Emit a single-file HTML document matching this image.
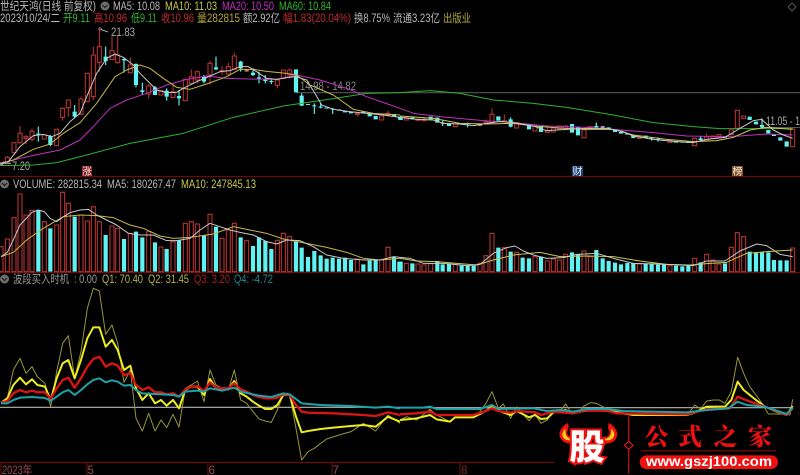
<!DOCTYPE html>
<html><head><meta charset="utf-8">
<style>
html,body{margin:0;padding:0;background:#000;width:800px;height:475px;overflow:hidden}
svg{display:block;position:absolute;left:0;top:0;filter:blur(.35px)}
text{font-family:"Liberation Sans","Noto Sans CJK SC",sans-serif;font-size:11.5px}
.r{fill:none;stroke:#b83434;stroke-width:3.2}
.c{fill:none;stroke:#5ff2f2;stroke-width:12.5}
.w{fill:none;stroke:#5ff2f2;stroke-width:3.5}
.l{fill:none;stroke-width:3;stroke-linejoin:round}
</style></head><body>
<svg width="800" height="475" viewBox="0 0 800 475" xmlns="http://www.w3.org/2000/svg">
<rect width="800" height="475" fill="#000"/>

<!-- separators -->
<path d="M0 176.500H800M0 272.500H800M0 462.500H555" stroke="#6a0c0c" stroke-width="1.200" fill="none"/>
<path d="M87 463V475M208 463V475M332 463V475M460 463V475M1 463V475" stroke="#6a1414" stroke-width="1" fill="none"/>
<path d="M296 92.700H800" stroke="#555" stroke-width="1.200" fill="none"/>
<path d="M763 127.500H800" stroke="#555" stroke-width="1" fill="none"/>

<!-- header -->
<g fill="#b9b9b9">
<text x="0" y="10" textLength="96" lengthAdjust="spacingAndGlyphs">世纪天鸿(日线 前复权)</text>
<text x="113" y="10" textLength="47" lengthAdjust="spacingAndGlyphs">MA5: 10.08</text>
<text x="165" y="10" fill="#c9c94c" textLength="52" lengthAdjust="spacingAndGlyphs">MA10: 11.03</text>
<text x="222" y="10" fill="#c22fc2" textLength="52" lengthAdjust="spacingAndGlyphs">MA20: 10.50</text>
<text x="279" y="10" fill="#2fb52f" textLength="52" lengthAdjust="spacingAndGlyphs">MA60: 10.84</text>
<text x="0" y="22" textLength="60" lengthAdjust="spacingAndGlyphs">2023/10/24/二</text>
<text x="63" y="22" fill="#2fb52f" textLength="27" lengthAdjust="spacingAndGlyphs">开9.11</text>
<text x="94" y="22" fill="#c22a2a" textLength="33" lengthAdjust="spacingAndGlyphs">高10.96</text>
<text x="131" y="22" fill="#2fb52f" textLength="26" lengthAdjust="spacingAndGlyphs">低9.11</text>
<text x="161" y="22" fill="#c22a2a" textLength="33" lengthAdjust="spacingAndGlyphs">收10.96</text>
<text x="197" y="22" fill="#b5a83a" textLength="43" lengthAdjust="spacingAndGlyphs">量282815</text>
<text x="243" y="22" textLength="37" lengthAdjust="spacingAndGlyphs">额2.92亿</text>
<text x="283" y="22" fill="#c22a2a" textLength="68" lengthAdjust="spacingAndGlyphs">幅1.83(20.04%)</text>
<text x="354" y="22" textLength="36" lengthAdjust="spacingAndGlyphs">换8.75%</text>
<text x="393" y="22" textLength="47" lengthAdjust="spacingAndGlyphs">流通3.23亿</text>
<text x="443" y="22" fill="#b5a83a" textLength="28" lengthAdjust="spacingAndGlyphs">出版业</text>
<text x="13" y="188" textLength="89" lengthAdjust="spacingAndGlyphs">VOLUME: 282815.34</text>
<text x="107" y="188" textLength="69" lengthAdjust="spacingAndGlyphs">MA5: 180267.47</text>
<text x="181" y="188" fill="#c9c94c" textLength="75" lengthAdjust="spacingAndGlyphs">MA10: 247845.13</text>
<text x="13" y="283" fill="#999" textLength="56" lengthAdjust="spacingAndGlyphs">波段买入时机</text>
<text x="74" y="283" fill="#999" textLength="23" lengthAdjust="spacingAndGlyphs">: 0.00</text>
<text x="102" y="283" fill="#b5b54a" textLength="41" lengthAdjust="spacingAndGlyphs">Q1: 70.40</text>
<text x="148" y="283" fill="#b5b54a" textLength="41" lengthAdjust="spacingAndGlyphs">Q2: 31.45</text>
<text x="194" y="283" fill="#a82020" textLength="36" lengthAdjust="spacingAndGlyphs">Q3: 3.20</text>
<text x="234" y="283" fill="#1f8a8f" textLength="39" lengthAdjust="spacingAndGlyphs">Q4: -4.72</text>
<text x="111" y="36" fill="#aaa" textLength="24" lengthAdjust="spacingAndGlyphs">21.83</text>
<text x="12" y="170" fill="#aaa" textLength="18" lengthAdjust="spacingAndGlyphs">7.20</text>
<text x="300" y="90" fill="#888" textLength="56" lengthAdjust="spacingAndGlyphs">14.98 - 14.82</text>
<text x="766" y="125" fill="#aaa" textLength="34" lengthAdjust="spacingAndGlyphs">11.05 - 1</text>
<text x="2" y="474" fill="#9a4a4a" textLength="30" lengthAdjust="spacingAndGlyphs">2023年</text>
<text x="87.500" y="474" fill="#9a4a4a">5</text>
<text x="208.500" y="474" fill="#9a4a4a">6</text>
<text x="332.500" y="474" fill="#9a4a4a">7</text>
<text x="461" y="474" fill="#7a2a2a">8</text>
</g>

<!-- pane buttons -->
<g fill="#6e6e6e">
<circle cx="105" cy="6" r="4.500"/><circle cx="4.500" cy="184" r="4.500"/><circle cx="4.500" cy="279" r="4.500"/>
</g>
<path d="M102.500 5l2.500 2.500 2.500-2.500M2 183l2.500 2.500 2.500-2.500M2 278l2.500 2.500 2.500-2.500" fill="none" stroke="#1c1c1c" stroke-width="1.200"/>
<path d="M792 3l4 4-4 4-4-4z" fill="none" stroke="#555" stroke-width="1"/>

<!-- event tags -->
<rect x="82" y="166" width="10" height="10" fill="#8a1818"/>
<rect x="572" y="166" width="11" height="10" fill="#1c4478"/>
<rect x="732" y="166" width="11" height="10" fill="#8a5020"/>
<g fill="#eee"><text x="82" y="175" style="font-size:10px">涨</text><text x="572.500" y="175" style="font-size:10px">财</text><text x="732.500" y="175" style="font-size:10px">榜</text></g>

<!-- markers -->
<circle cx="100" cy="29" r="1.200" fill="none" stroke="#bbb" stroke-width=".7"/>
<path d="M101 29.500L108 32M1 163.500L11 163.500M1 163.500l3-2M1 163.500l3 2" stroke="#ccc" fill="none" stroke-width=".7"/>

<!-- main chart & volume left: coords are zoomed x3 -->
<g transform="scale(.33333)">
<path class="r" d="M22 468V472M22 487V490M60 378V400M60 428V430M78 405V410M78 415V432M96 385V394M96 418V425M188 322V325M188 352V362M205 298V300M205 323V350M243 290V297M243 343V345M280 140V165M280 290V300M298 85V140M298 187V215M336 110V152M336 178V180M353 108V165M353 188V190M391 172V195M391 218V220M446 252V258M446 282V295M519 250V275M519 292V295M574 208V230M574 250V252M592 212V215M592 240V250M630 183V190M630 225V253M666 198V212M666 215V225M685 188V200M685 222V225M703 158V168M703 208V210M832 235V240M832 256V265M869 205V210M869 225V235M1072 343V350M1164 332V340M1164 345V350"/>
<path class="r" d="M16 472h12v15h-12zM36 428h12v30h-12zM54 400h12v28h-12zM72 410h12v5h-12zM90 394h12v24h-12zM127 405h12v12h-12zM164 388h12v49h-12zM182 325h12v27h-12zM199 300h12v23h-12zM237 297h12v46h-12zM256 220h12v85h-12zM274 165h12v125h-12zM292 140h12v47h-12zM330 152h12v26h-12zM347 165h12v23h-12zM385 195h12v23h-12zM440 258h12v24h-12zM477 272h12v13h-12zM513 275h12v17h-12zM550 238h12v64h-12zM568 230h12v20h-12zM586 215h12v25h-12zM624 190h12v35h-12zM660 212h12v3h-12zM679 200h12v22h-12zM697 168h12v40h-12zM826 240h12v16h-12zM844 210h12v25h-12zM863 210h12v15h-12zM1066 340h12v3h-12zM1139 348h12v12h-12zM1158 340h12v5h-12z"/>
<path class="w" d="M115 380V425M151 405V438M224 315V355M317 140V195M372 175V218M408 190V262M427 248V285M465 258V285M500 265V302M537 270V316M612 225V250M648 170V210M722 183V215M759 205V228M777 215V250M796 225V250M814 238V252M905 280V318M943 310V342M962 310V325M998 324V342"/>
<path class="c" d="M115 401V405M151 409V435M224 335V350M317 170V183M372 177V181M408 192V255M427 271V276M465 262V285M500 272V290M537 288V295M612 230V245M648 202V208M722 185V205M759 218V225M777 232V237M796 238V243M814 243V246M888 208V277M905 287V317M924 312V315M943 316V319M962 320V323M980 323V326M998 326V328M1017 328V332M1035 333V337M1053 335V340M1090 335V340M1109 338V349M1127 348V358M1182 342V350M1200 350V358"/>
<path d="M740 208V215" stroke="#d07a30" stroke-width="12" fill="none"/>
<path d="M3 487V497" stroke="#c87ac8" stroke-width="12" fill="none"/>

<path class="l" stroke="#2fb02f" d="M3 497L100 495 170 488 260 465 390 430 550 400 700 352 850 318 1000 296 1100 280 1200 278"/>
<path class="l" stroke="#c030c0" d="M3 490L60 475 120 462 180 450 240 420 280 380 330 325 380 300 440 280 500 255 560 238 620 228 680 235 750 237 830 238 890 225 960 240 1040 265 1100 290 1200 325"/>
<path class="l" stroke="#c4b848" d="M3 490L40 480 100 448 150 432 190 400 240 368 290 310 345 230 380 210 420 195 450 205 490 235 530 262 570 268 620 252 680 230 720 208 760 208 800 214 860 220 890 225 930 255 1000 285 1060 328 1120 340 1200 345"/>
<path class="l" stroke="#c8c8c8" d="M3 490L25 485 60 440 100 407 130 403 155 410 180 400 210 365 240 340 260 290 290 220 320 175 345 162 370 172 400 195 420 220 445 245 470 270 500 278 530 277 550 265 590 245 630 228 660 215 690 212 720 200 745 200 770 215 800 235 830 238 860 233 888 230 920 240 945 280 965 315 1000 328 1050 335 1100 340 1150 345 1200 352"/>

<!-- volume left -->
<g transform="translate(0,525)">
<path class="r" d="M-3 215h12V290h-12zM16 192h12V290h-12zM36 128h12V290h-12zM54 57h12V290h-12zM72 120h12V290h-12zM90 106h12V290h-12zM127 140h12V290h-12zM164 150h12V290h-12zM182 52h12V290h-12zM199 85h12V290h-12zM237 120h12V290h-12zM256 138h12V290h-12zM274 95h12V290h-12zM292 140h12V290h-12zM330 153h12V290h-12zM347 160h12V290h-12zM385 175h12V290h-12zM440 170h12V290h-12zM477 216h12V290h-12zM513 200h12V290h-12zM550 145h12V290h-12zM568 140h12V290h-12zM586 147h12V290h-12zM624 118h12V290h-12zM660 190h12V290h-12zM679 165h12V290h-12zM697 145h12V290h-12zM734 197h12V290h-12zM826 196h12V290h-12zM844 175h12V290h-12zM863 185h12V290h-12zM1066 252h12V290h-12zM1139 255h12V290h-12zM1158 217h12V290h-12z"/>
<path class="c" d="M115 105V290M151 160V290M224 125V290M317 180V290M372 192V290M408 170V290M427 187V290M465 202V290M500 222V290M537 195V290M612 180V290M648 155V290M722 187V290M759 213V290M777 187V290M796 198V290M814 222V290M888 200V290M905 218V290M924 246V290M943 228V290M962 241V290M980 251V290M998 248V290M1017 251V290M1035 248V290M1053 255V290M1090 268V290M1109 257V290M1127 255V290M1182 245V290M1198 260V290"/>
<path class="l" stroke="#c4b848" d="M3 245L40 232 80 195 130 160 190 125 240 120 290 122 340 128 390 150 430 160 480 183 520 190 570 187 640 177 700 155 750 165 800 175 850 192 920 205 980 217 1040 232 1090 250 1140 255 1200 250"/>
<path class="l" stroke="#c8c8c8" d="M3 245L22 232 42 190 60 150 96 112 115 105 133 110 150 130 170 140 190 125 210 113 240 105 265 103 290 120 320 135 350 150 385 175 420 180 460 180 500 197 530 197 570 190 600 165 630 145 660 155 690 165 720 172 760 180 800 200 830 207 860 195 900 197 940 215 980 240 1030 250 1090 255 1140 255 1182 245 1200 247"/>
</g>

<!-- oscillator left -->
<g transform="translate(0,825)">
<path d="M0 397H1200" stroke="#b8b8b8" stroke-width="3.500" fill="none"/>
<path class="l" stroke="#96963c" d="M3 383L22 370 40 285 60 250 78 295 96 275 112 305 135 325 152 395 170 290 188 205 205 182 224 310 243 230 262 100 280 40 298 48 317 178 336 150 353 205 372 322 391 285 408 430 427 468 446 415 465 468 483 435 500 458 519 418 537 456 556 340 574 330 592 318 612 380 630 285 648 330 666 340 685 345 703 285 722 375 740 385 759 410 777 432 796 438 814 442 832 405 850 360 869 360 888 460 905 555 924 530 943 520 962 505 980 492 1017 480 1053 470 1090 445 1127 468 1164 420 1200 445"/>
<path class="l" style="stroke-width:6" stroke="#ecec1e" d="M3 383L22 370 40 330 60 308 78 328 96 313 112 330 135 335 152 375 170 310 188 265 205 255 224 310 243 255 262 190 280 157 298 157 317 215 336 195 353 225 372 285 391 272 408 340 427 375 446 355 465 385 483 375 500 392 519 375 537 400 556 345 574 335 592 335 612 360 630 312 648 340 666 343 685 343 703 318 722 355 740 365 759 380 777 392 796 402 814 402 832 390 850 360 869 360 888 425 905 472 924 468 962 462 1000 458 1053 453 1090 450 1127 455 1164 425 1200 440"/>
<path class="l" style="stroke-width:7" stroke="#d81414" d="M3 383L22 378 40 355 60 345 78 352 96 347 112 352 135 352 152 372 170 340 188 315 205 308 224 338 243 310 262 275 280 252 298 245 317 275 336 265 353 272 372 300 391 295 408 330 427 345 446 337 465 352 483 352 500 358 519 355 537 365 556 343 574 335 592 333 612 348 630 322 648 338 666 340 685 340 703 325 722 343 740 350 759 360 777 366 796 370 814 370 832 368 850 358 869 360 888 390 905 410 924 413 1000 415 1053 418 1090 420 1127 423 1164 412 1200 420"/>
<path class="l" style="stroke-width:6" stroke="#1ba3a8" d="M3 385L22 385 40 375 60 368 96 366 135 369 152 378 170 365 188 352 205 345 224 360 243 345 262 328 280 315 298 310 317 322 336 316 353 320 372 332 391 330 408 345 427 355 465 357 519 360 537 365 556 350 592 347 612 350 630 340 666 347 703 338 722 350 777 362 814 366 850 355 869 358 905 385 962 390 1053 393 1127 398 1164 395 1200 400"/>
</g>
</g>

<!-- main chart & volume right -->
<g transform="translate(400,0) scale(.33333)">
<path class="r" d="M72 352V358M258 358V364M276 325V343M313 343V362M442 380V392M589 368V378M920 400V410"/>
<path class="r" d="M13 352h12v8h-12zM48 357h12v4h-12zM66 358h12v4h-12zM160 372h12v8h-12zM252 364h12v4h-12zM270 343h12v25h-12zM307 362h12v4h-12zM344 368h12v16h-12zM399 378h12v15h-12zM436 392h12v5h-12zM454 384h12v12h-12zM472 378h12v8h-12zM491 378h12v8h-12zM546 390h12v23h-12zM565 380h12v6h-12zM712 408h12v7h-12zM804 421h12v6h-12zM878 415h12v22h-12zM914 410h12v12h-12zM933 408h12v7h-12zM951 404h12v8h-12zM988 390h12v13h-12zM1006 331h12v54h-12zM1025 348h12v7h-12zM1172 387h12v53h-12z"/>
<path class="w" d="M128 362V378M203 368V382M332 352V382M589 368V382M755 413V422M774 412V425M902 410V425M1086 355V385"/>
<path class="c" d="M2 352V360M37 352V358M92 350V358M112 353V368M128 368V371M147 372V378M185 372V374M203 374V376M221 376V378M295 349V362M332 358V380M368 370V373M387 373V388M423 378V396M516 372V398M534 380V406M589 378V382M626 382V386M645 387V396M663 396V401M682 400V404M700 406V414M737 407V414M755 413V416M774 417V420M792 420V423M828 423V428M847 426V428M865 425V429M902 415V420M975 408V413M1049 350V360M1068 365V373M1086 375V382M1105 390V400M1122 403V408M1141 412V422M1160 424V440"/>
<path d="M240 372V378" stroke="#d07a30" stroke-width="12" fill="none"/>
<path d="M608 378V386" stroke="#a88ae0" stroke-width="12" fill="none"/>

<path class="l" stroke="#2fb02f" d="M0 278L90 272 180 280 280 300 400 310 500 322 640 345 760 368 880 380 960 386 1178 386"/>
<path class="l" stroke="#c030c0" d="M0 325L40 340 120 350 250 362 340 368 440 378 560 382 640 388 760 398 860 408 960 410 1020 408 1100 402 1178 405"/>
<path class="l" stroke="#c8c850" d="M0 348L100 355 180 370 260 372 340 370 400 378 480 384 560 388 640 388 700 405 800 418 880 425 950 422 1000 412 1050 390 1100 382 1178 388"/>
<path class="l" stroke="#c8c8c8" d="M0 352L50 358 100 360 130 370 180 372 220 377 260 370 300 364 340 368 400 378 440 392 500 388 560 385 620 385 670 395 700 408 760 418 830 425 880 428 920 418 975 412 1020 385 1060 362 1085 358 1120 390 1150 405 1178 415"/>

<g transform="translate(0,525)">
<path class="r" d="M13 265h12V290h-12zM48 267h12V290h-12zM66 270h12V290h-12zM86 266h12V290h-12zM160 268h12V290h-12zM234 265h12V290h-12zM252 242h12V290h-12zM270 175h12V290h-12zM307 218h12V290h-12zM344 232h12V290h-12zM399 245h12V290h-12zM436 258h12V290h-12zM454 252h12V290h-12zM472 255h12V290h-12zM491 238h12V290h-12zM546 228h12V290h-12zM565 245h12V290h-12zM712 267h12V290h-12zM804 272h12V290h-12zM878 250h12V290h-12zM914 238h12V290h-12zM933 255h12V290h-12zM951 267h12V290h-12zM988 217h12V290h-12zM1006 173h12V290h-12zM1025 185h12V290h-12zM1172 219h12V290h-12z"/>
<path class="c" d="M2 260V290M37 265V290M112 258V290M128 268V290M147 265V290M185 272V290M203 272V290M221 272V290M295 218V290M332 230V290M368 248V290M387 250V290M423 245V290M516 232V290M534 238V290M589 225V290M608 250V290M626 258V290M645 263V290M663 268V290M682 264V290M700 264V290M737 265V290M755 265V290M774 269V290M792 267V290M828 272V290M847 274V290M865 272V290M902 262V290M975 265V290M1049 230V290M1068 233V290M1086 232V290M1105 232V290M1122 255V290M1141 256V290M1160 256V290"/>
<path class="l" stroke="#c8c850" d="M0 250L50 258 110 260 170 265 230 270 280 255 340 240 420 232 480 245 560 243 640 245 720 258 800 268 870 270 930 265 980 262 1040 235 1100 230 1178 225"/>
<path class="l" stroke="#c8c8c8" d="M0 247L30 250 70 265 130 265 200 272 240 268 280 235 320 218 345 213 370 228 400 240 440 250 490 248 530 238 590 235 640 250 700 265 800 268 880 272 920 258 975 258 1020 228 1070 207 1100 212 1140 238 1178 245"/>
</g>

<g transform="translate(0,1020)">
<path d="M0 203H1178" stroke="#b8b8b8" stroke-width="3.500" fill="none"/>
<path class="l" stroke="#96963c" d="M0 240L20 230 50 240 90 208 110 225 150 245 165 232 220 232 240 215 258 190 276 155 295 205 310 192 332 235 350 200 368 222 387 242 405 222 423 250 442 240 460 212 478 215 497 192 516 222 534 218 552 198 571 188 589 190 608 200 626 208 645 220 700 225 800 225 865 222 884 195 902 207 920 183 940 180 957 180 975 190 994 155 1013 52 1031 100 1049 140 1068 165 1086 190 1105 222 1160 222 1170 225 1178 178"/>
<path class="l" style="stroke-width:6" stroke="#ecec1e" d="M0 240L20 238 50 235 90 225 110 238 150 245 165 232 220 232 240 222 258 212 276 200 295 212 332 225 350 213 368 222 387 232 405 225 423 237 442 235 460 217 497 210 516 220 552 213 589 210 640 215 700 225 860 225 884 218 920 200 975 200 994 180 1013 125 1031 150 1068 180 1095 200 1130 215 1160 225 1178 198"/>
<path class="l" style="stroke-width:7" stroke="#d81414" d="M0 223L50 220 90 215 110 225 220 225 258 213 276 205 295 213 332 218 350 213 405 217 423 225 460 215 516 220 552 212 620 212 650 220 860 223 920 208 990 205 1013 170 1050 185 1095 200 1160 225 1178 205"/>
<path class="l" style="stroke-width:6" stroke="#1ba3a8" d="M0 203L70 203 90 200 110 207 240 207 276 195 295 207 400 205 440 213 480 210 520 215 560 207 620 207 670 213 860 217 920 210 985 205 1013 185 1040 195 1095 200 1160 222 1178 203"/>
</g>
</g>

<!-- logo: coords zoomed x3 from (550,415) -->
<g transform="translate(550,415) scale(.33333)">
<rect x="15" y="6" width="735" height="174" fill="#000"/>
<path d="M52 24C30 38 22 58 34 74C44 86 62 88 76 84L72 66C58 68 50 60 52 50C54 42 60 34 52 24Z" fill="#f01010"/>
<path d="M46 40C36 52 34 62 42 70C50 77 60 77 68 75L66 71C54 71 45 64 46 40Z" fill="#f2d21a"/>
<path d="M178 24C200 38 208 58 196 74C186 86 168 88 154 84L158 66C172 68 180 60 178 50C176 42 170 34 178 24Z" fill="#f01010"/>
<path d="M184 40C194 52 196 62 188 70C180 77 170 77 162 75L164 71C176 71 185 64 184 40Z" fill="#f2d21a"/>
<text x="111" y="133" text-anchor="middle" fill="#fff" stroke="#f01010" stroke-width="12" paint-order="stroke" style="font-family:'Noto Sans CJK SC',sans-serif;font-size:106px;font-weight:900">股</text>
<path d="M236 5V175" stroke="#d01010" stroke-width="3.500" fill="none"/>
<path d="M236 79l13 12-13 12-13-12z" fill="#000" stroke="#e01818" stroke-width="3.500"/>
<g fill="#f01010" text-anchor="middle">
<text x="320" y="90" style="font-family:'Noto Serif CJK SC',serif;font-size:72px;font-weight:900">公</text>
<text x="420" y="90" style="font-family:'Noto Serif CJK SC',serif;font-size:72px;font-weight:900">式</text>
<text x="527" y="90" style="font-family:'Noto Serif CJK SC',serif;font-size:72px;font-weight:900">之</text>
<text x="630" y="90" style="font-family:'Noto Serif CJK SC',serif;font-size:72px;font-weight:900">家</text>
</g>
<path d="M272 107.500H678" stroke="#801010" stroke-width="3.500" fill="none"/>
<rect x="269" y="121" width="415" height="41" rx="20.500" fill="#f01010"/>
<text x="288" y="153" fill="#fff" textLength="378" lengthAdjust="spacingAndGlyphs" style="font-size:42px;font-weight:700">www.gszj100.com</text>
</g>
</svg>
</body></html>
